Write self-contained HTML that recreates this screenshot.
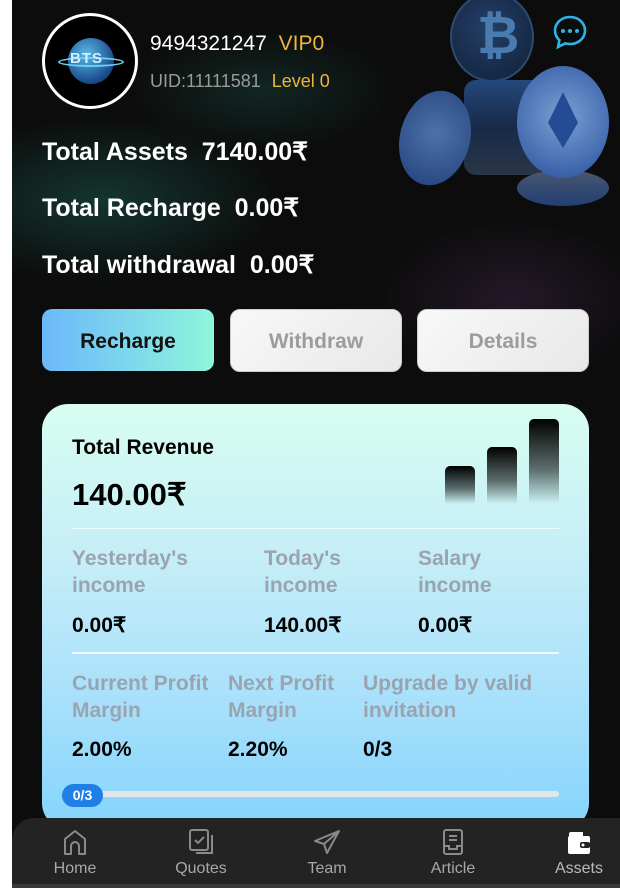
<!DOCTYPE html>
<html><head><meta charset="utf-8"><style>
*{margin:0;padding:0;box-sizing:border-box}
body{width:620px;height:888px;overflow:hidden;background:#fff;font-family:"Liberation Sans",sans-serif;position:relative}
#app{position:absolute;left:12px;top:0;width:608px;height:888px;background:#0c0c0c;overflow:hidden}
.hero{position:absolute;left:0;top:0;width:608px;height:375px;background:
radial-gradient(ellipse 260px 120px at 90px 200px,rgba(40,160,140,.28),transparent 70%),
radial-gradient(ellipse 200px 90px at 250px 90px,rgba(40,160,140,.18),transparent 70%),
radial-gradient(ellipse 200px 120px at 500px 300px,rgba(140,80,160,.18),transparent 70%),
#0c0c0c}
.abs{position:absolute}
.w{color:#fff;font-weight:bold;font-size:25px;letter-spacing:0}
.btn{position:absolute;top:309px;width:172px;height:63px;border-radius:10px;font-size:21px;font-weight:bold;display:flex;align-items:center;justify-content:center;padding-top:3px}
.card{position:absolute;left:30px;top:404px;width:547px;height:425px;border-radius:26px;background:linear-gradient(180deg,#d8fdf0 0%,#c6eef7 35%,#a8e0fb 70%,#84d4fc 100%)}
.g{color:#9aa4b0;font-weight:bold;font-size:21px;line-height:27px}
.v{color:#000;font-weight:bold;font-size:21px}
.bar{position:absolute;bottom:0;width:30px;border-radius:5px 5px 0 0;background:linear-gradient(180deg,#000,rgba(0,0,0,.55) 60%,rgba(0,0,0,0))}
.nav{position:absolute;left:0;top:818px;width:608px;height:66px;background:#232323;border-radius:22px 0 0 0}
.ni{position:absolute;top:0;width:100px;text-align:center;color:#a8a8a8;font-size:16px}
.ni svg{display:block;margin:10px auto 4px}
</style></head><body>
<div id="app">
<div class="hero"></div>
<div class="abs" style="left:30px;top:13px;width:96px;height:96px;border-radius:50%;border:3px solid #fff;background:#000"></div>
<div class="abs" style="left:56px;top:38px;width:46px;height:46px;border-radius:50%;background:radial-gradient(circle at 40% 35%,#5ab8e8,#1a4a8a 70%,#0a1a30)"></div>
<div class="abs" style="left:46px;top:57px;width:66px;height:10px;border:2px solid #6ad0f0;border-radius:50%"></div>
<div class="abs" style="left:58px;top:50px;color:#cfefff;font-weight:bold;font-size:15px;letter-spacing:1px">BTS</div>
<div class="abs" style="left:138px;top:32px;color:#fff;font-size:21px">9494321247 <span style="color:#f0b43c;margin-left:6px">VIP0</span></div>
<div class="abs" style="left:138px;top:71px;color:#9a9a9a;font-size:18px">UID:11111581 <span style="color:#f0b43c;margin-left:6px">Level 0</span></div>
<div class="abs" style="left:438px;top:-8px;width:84px;height:90px;border-radius:50%;background:radial-gradient(circle at 45% 40%,#243f66,#0f2038);border:2px solid #2e4a70"></div>
<div class="abs" style="left:465px;top:6px;color:#4a7bb0;font-weight:bold;font-size:52px">₿</div>
<div class="abs" style="left:452px;top:80px;width:80px;height:95px;border-radius:12px;background:linear-gradient(180deg,#24487c,#172a48 50%,#2a3648)"></div>
<div class="abs" style="left:388px;top:90px;width:70px;height:96px;border-radius:50%;background:radial-gradient(circle at 50% 45%,#4d72aa,#22407a);transform:rotate(15deg)"></div>
<div class="abs" style="left:505px;top:170px;width:92px;height:36px;border-radius:50%;background:linear-gradient(180deg,#4a5870,#223e72)"></div>
<div class="abs" style="left:505px;top:66px;width:92px;height:112px;border-radius:50%;background:radial-gradient(circle at 50% 45%,#7aa0d2,#4068ae 70%,#284c8c)"></div>
<div class="abs" style="left:536px;top:92px;width:30px;height:56px;background:#244c96;clip-path:polygon(50% 0,100% 55%,50% 100%,0 55%)"></div>
<svg class="abs" style="left:540px;top:14px" width="36" height="36" viewBox="0 0 36 36"><path d="M18 3C9.7 3 3 8.9 3 16.5c0 3.8 1.7 7.2 4.4 9.6L6 33l7.2-3.6c1.5.4 3.1.6 4.8.6 8.3 0 15-5.9 15-13.5S26.3 3 18 3z" fill="none" stroke="#29b6e6" stroke-width="2.6"/><circle cx="11" cy="17" r="2" fill="#29b6e6"/><circle cx="18" cy="17" r="2" fill="#29b6e6"/><circle cx="25" cy="17" r="2" fill="#29b6e6"/></svg>
<div class="abs w" style="left:30px;top:137px">Total Assets&nbsp; 7140.00₹</div>
<div class="abs w" style="left:30px;top:193px">Total Recharge&nbsp; 0.00₹</div>
<div class="abs w" style="left:30px;top:250px">Total withdrawal&nbsp; 0.00₹</div>
<div class="btn" style="left:30px;height:62px;background:linear-gradient(90deg,#6cb8fa,#8ff5dc);color:#111">Recharge</div>
<div class="btn" style="left:218px;background:linear-gradient(135deg,#f8f8f8,#e8e8e8);color:#9c9c9c;border:1px solid #ccc">Withdraw</div>
<div class="btn" style="left:405px;background:linear-gradient(135deg,#f8f8f8,#e8e8e8);color:#9c9c9c;border:1px solid #ccc">Details</div>
<div class="card">
 <div class="abs" style="left:30px;top:32px;font-size:21px;font-weight:bold;color:#000">Total Revenue</div>
 <div class="abs" style="left:30px;top:73px;font-size:31px;font-weight:bold;color:#000">140.00₹</div>
 <div class="abs" style="left:403px;top:12px;width:115px;height:88px">
  <div class="bar" style="left:0;height:38px"></div><div class="bar" style="left:42px;height:57px"></div><div class="bar" style="left:84px;height:85px"></div>
 </div>
 <div class="abs" style="left:30px;top:124px;width:487px;height:1px;background:#f0fbff"></div>
 <div class="abs g" style="left:30px;top:141px">Yesterday's<br>income</div>
 <div class="abs g" style="left:222px;top:141px">Today's<br>income</div>
 <div class="abs g" style="left:376px;top:141px">Salary<br>income</div>
 <div class="abs v" style="left:30px;top:209px">0.00₹</div>
 <div class="abs v" style="left:222px;top:209px">140.00₹</div>
 <div class="abs v" style="left:376px;top:209px">0.00₹</div>
 <div class="abs" style="left:30px;top:248px;width:487px;height:2px;background:#eefaff"></div>
 <div class="abs g" style="left:30px;top:266px">Current Profit<br>Margin</div>
 <div class="abs g" style="left:186px;top:266px">Next Profit<br>Margin</div>
 <div class="abs g" style="left:321px;top:266px">Upgrade by valid<br>invitation</div>
 <div class="abs v" style="left:30px;top:334px">2.00%</div>
 <div class="abs v" style="left:186px;top:334px">2.20%</div>
 <div class="abs v" style="left:321px;top:334px">0/3</div>
 <div class="abs" style="left:50px;top:387px;width:467px;height:6px;border-radius:3px;background:#e4e6ea"></div>
 <div class="abs" style="left:20px;top:380px;width:41px;height:23px;border-radius:12px;background:#1f7fe6;color:#fff;font-size:14px;font-weight:bold;text-align:center;line-height:23px">0/3</div>
</div>
<div class="nav">
 <div class="ni" style="left:13px"><svg width="26" height="28" viewBox="0 0 26 28"><path d="M3 26V11L13 3l10 8v15h-6v-8a4 4 0 0 0-8 0v8z" fill="none" stroke="#8a8a8a" stroke-width="2" stroke-linejoin="round"/></svg>Home</div>
 <div class="ni" style="left:139px"><svg width="26" height="28" viewBox="0 0 26 28"><rect x="2" y="2" width="18" height="20" rx="2" fill="none" stroke="#8a8a8a" stroke-width="2"/><path d="M24 7v18H8" fill="none" stroke="#8a8a8a" stroke-width="2"/><path d="M7 12l3 3 6-6" fill="none" stroke="#8a8a8a" stroke-width="2"/></svg>Quotes</div>
 <div class="ni" style="left:265px"><svg width="28" height="28" viewBox="0 0 28 28"><path d="M26 3L2 13l9 3 3 9zM11 16l15-13" fill="none" stroke="#8a8a8a" stroke-width="2" stroke-linejoin="round"/></svg>Team</div>
 <div class="ni" style="left:391px"><svg width="24" height="28" viewBox="0 0 24 28"><rect x="3" y="2" width="18" height="24" rx="2" fill="none" stroke="#8a8a8a" stroke-width="2"/><path d="M8 8h8M8 12h8M3 18h5v3h8v-3h5" fill="none" stroke="#8a8a8a" stroke-width="2"/></svg>Article</div>
 <div class="ni" style="left:517px;color:#bbb"><svg width="26" height="28" viewBox="0 0 26 28"><path d="M3 8h14V4H5a2 2 0 0 0-2 2z" fill="#fff"/><rect x="2" y="8" width="22" height="18" rx="2" fill="#fff"/><rect x="14" y="14" width="10" height="6" rx="2" fill="#232323"/><circle cx="17" cy="17" r="1.5" fill="#fff"/></svg>Assets</div>
</div>
<div class="abs" style="left:0;top:884px;width:608px;height:4px;background:#3a3a3a"></div>
</div>
</body></html>
